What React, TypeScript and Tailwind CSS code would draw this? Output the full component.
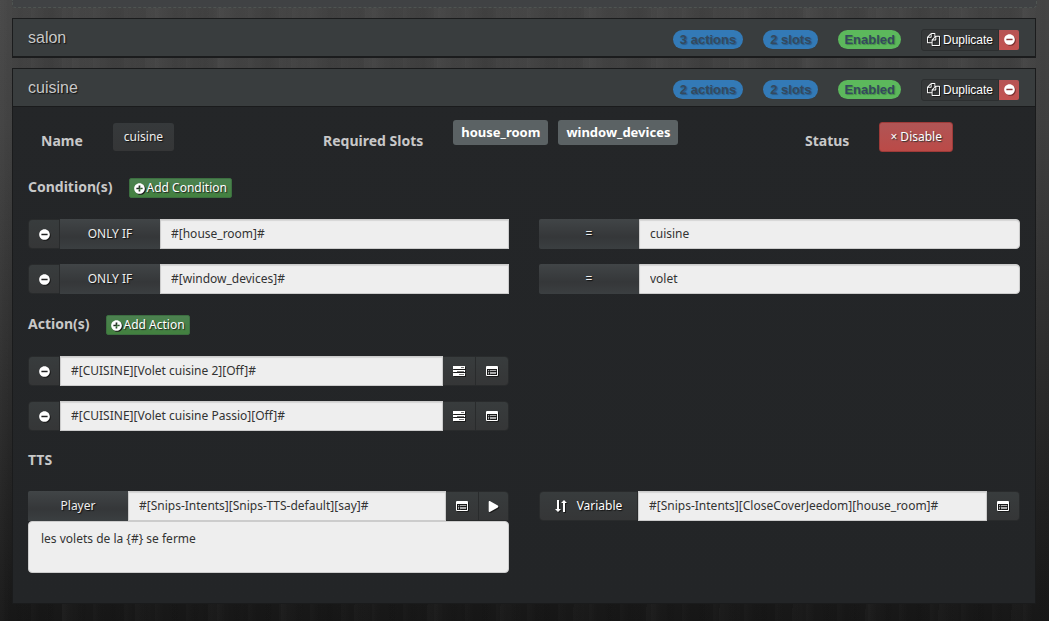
import type { ReactNode } from 'react'
import clsx from 'clsx'
import { FaMinusCircle, FaPlay, FaPlusCircle } from 'react-icons/fa'

const inputClass =
  'block h-[30px] w-full min-w-0 flex-1 border border-[#ccc] bg-[#eee] px-[10px] pb-[2px] text-xs text-[#333] shadow-[inset_0_1px_1px_rgba(0,0,0,0.1)] outline-none'
const addonClass =
  'flex h-[30px] w-[100px] shrink-0 items-center justify-center bg-gradient-to-b from-[#414547] via-[#353739] via-60% to-[#3b3f41] text-xs text-[#eee] [text-shadow:1px_1px_1px_#111]'
const toolClass =
  'flex h-[30px] shrink-0 items-center justify-center border border-[#292b2c] bg-gradient-to-b from-[#383c3d] to-[#353637] text-xs text-white'

const iconShadow = 'drop-shadow-[1px_1px_0_#1a1a1a]'

function CopyIcon() {
  return (
    <svg viewBox="0 0 1792 1792" className={clsx('size-[13px]', iconShadow)} fill="currentColor" aria-hidden="true">
      <path d="M1696 384q40 0 68 28t28 68v1216q0 40-28 68t-68 28h-960q-40 0-68-28t-28-68v-288h-544q-40 0-68-28t-28-68v-672q0-40 20-88t48-76l408-408q28-28 76-48t88-20h416q40 0 68 28t28 68v328q68-40 128-40h416zm-544 213l-299 299h299v-299zm-640-384l-299 299h299v-299zm196 647l316-316v-416h-384v416q0 40-28 68t-68 28h-416v640h512v-256q0-40 20-88t48-76zm956 804v-1152h-384v416q0 40-28 68t-68 28h-416v640h896z" />
    </svg>
  )
}

function TasksIcon() {
  return (
    <svg viewBox="0 0 12 10" className={clsx('h-[10px] w-3', iconShadow)} aria-hidden="true">
      <path fill="#fff" d="M0 0h12v3H0zM0 4h12v2H0zM0 7h12v3H0z" />
      <path fill="#777" d="M8 1h3v1H8zM4 5h7v1H4zM6 8h5v1H6z" />
    </svg>
  )
}

function ListIcon() {
  return (
    <svg viewBox="0 0 12 10" className={clsx('h-[10px] w-3', iconShadow)} aria-hidden="true">
      <path fill="#fff" fillRule="evenodd" d="M1 0h10q1 0 1 1v8q0 1-1 1H1q-1 0-1-1V1q0-1 1-1zM1 3v6h10V3z" />
      <path fill="#aaa" d="M2 4h1v1H2zM4 4h6v1H4zM2 6h1v2H2zM4 6h6v2H4z" />
    </svg>
  )
}

function SwapIcon() {
  return (
    <svg viewBox="0 0 12 12" className={clsx('size-3', iconShadow)} fill="#fff" aria-hidden="true">
      <path d="M2 0h2v9h2l-3 3-3-3h2zM8 12h2V3h2L9 0 6 3h2z" />
    </svg>
  )
}

function Badge({ green, children }: { green?: boolean; children: ReactNode }) {
  return (
    <span
      className={clsx(
        'rounded-full text-center text-[13px] leading-[19px] font-bold text-[#34495e] [text-shadow:1px_1px_1px_rgba(0,0,0,0.25)]',
        green ? 'bg-[#5cb85c] px-[6px]' : 'bg-[#337ab7] px-[7px]',
      )}
    >
      {children}
    </span>
  )
}

function PanelHeader({ title, actions }: { title: string; actions: number }) {
  return (
    <header className="flex h-[37px] items-center justify-between bg-[#393d3e] pr-4 pl-[15px] font-['Liberation_Sans',Arial,sans-serif]">
      <h2 className="text-base text-[#c8c8c8] [text-shadow:1px_1px_1px_#111]">{title}</h2>
      <div className="flex items-center gap-5 pt-[4px]">
        <Badge>{actions} actions</Badge>
        <Badge>2 slots</Badge>
        <Badge green>Enabled</Badge>
        <div className="flex items-center">
          <button
            type="button"
            className="flex h-[22px] items-center gap-[3px] rounded-l-[3px] border border-[#2c2f30] bg-[#363839] px-[5px] text-xs text-white [text-shadow:1px_1px_1px_#111]"
          >
            <CopyIcon />
            Duplicate
          </button>
          <button
            type="button"
            aria-label={`Remove ${title}`}
            className="flex h-5 w-5 items-center justify-center rounded-r-[2px] bg-gradient-to-b from-[#b65454] to-[#c45250] pb-px text-white"
          >
            <FaMinusCircle className="size-[11px] drop-shadow-[1px_1px_0_#7a2f2e]" />
          </button>
        </div>
      </div>
    </header>
  )
}

function RemoveButton({ label }: { label: string }) {
  return (
    <button type="button" aria-label={label} className={clsx(toolClass, 'w-8 rounded-l-[4px]')}>
      <FaMinusCircle className={clsx('size-[11px]', iconShadow)} />
    </button>
  )
}

function AddButton({ children }: { children: ReactNode }) {
  return (
    <button
      type="button"
      className="flex h-5 items-center gap-[2px] rounded-[2px] border border-[#3c6f40] bg-gradient-to-b from-[#4c8150] to-[#43813f] px-1 text-xs text-white [text-shadow:1px_1px_1px_#222]"
    >
      <FaPlusCircle className={clsx('size-[11px]', iconShadow)} />
      {children}
    </button>
  )
}

function SectionTitle({ title, children }: { title: string; children?: ReactNode }) {
  return (
    <div className="flex h-5 items-center gap-4">
      <h3 className="pb-[2px] text-sm font-bold text-[#c8c8c8]">{title}</h3>
      {children}
    </div>
  )
}

function ConditionRow({ name, value }: { name: string; value: string }) {
  return (
    <div className="grid grid-cols-2 gap-[30px]">
      <div className="flex">
        <RemoveButton label={`Remove condition ${name}`} />
        <label htmlFor={`cond-${name}`} className={addonClass}>ONLY IF</label>
        <input id={`cond-${name}`} className={inputClass} defaultValue={`#[${name}]#`} />
      </div>
      <div className="flex">
        <label htmlFor={`value-${name}`} className={clsx(addonClass, 'rounded-l-[2px]')}>=</label>
        <input id={`value-${name}`} className={clsx(inputClass, 'rounded-r-[4px]')} defaultValue={value} />
      </div>
    </div>
  )
}

function ActionRow({ command }: { command: string }) {
  return (
    <div className="grid grid-cols-2 gap-[30px]">
      <div className="flex">
        <RemoveButton label={`Remove action ${command}`} />
        <input aria-label="Action" className={inputClass} defaultValue={command} />
        <button type="button" aria-label="Scenario action" className={clsx(toolClass, 'w-[33px] border-l-0')}>
          <TasksIcon />
        </button>
        <button type="button" aria-label="Select command" className={clsx(toolClass, '-ml-px w-[34px] rounded-r-[4px]')}>
          <ListIcon />
        </button>
      </div>
    </div>
  )
}

export default function App() {
  return (
    <div className="min-h-screen bg-[repeating-linear-gradient(90deg,rgba(255,255,255,0.015)_0px,transparent_9px,rgba(0,0,0,0.03)_20px,transparent_31px),repeating-linear-gradient(91deg,rgba(255,255,255,0.02)_0px,transparent_23px,rgba(0,0,0,0.05)_50px,transparent_73px),linear-gradient(#454545,#404040_20%,#2c2c2c_60%,#171717)] px-3 font-['Noto_Sans',sans-serif] text-xs">
      <div className="h-2 rounded-b-[4px] border border-t-0 border-dashed border-[#4f5552] bg-[#404244]" />

      <section className="mt-[10px] mr-px border border-b-2 border-[#1b1c1d]">
        <PanelHeader title="salon" actions={3} />
      </section>

      <section className="mt-[10px] mr-px border border-[#1a1b1c] bg-gradient-to-b from-[#242628] to-[#232527]">
        <PanelHeader title="cuisine" actions={2} />

        <div className="border-t border-[#1a1b1c] px-[15px] pt-[13px] pb-[30px]">
          <div className="grid h-8 grid-cols-[282fr_482fr_228fr] text-sm font-bold text-[#c8c8c8]">
            <div className="flex items-center gap-[30px] pl-[13px]">
              <span className="pt-[10px]">Name</span>
              <button
                type="button"
                className="mt-[2px] h-7 rounded-[3px] bg-gradient-to-b from-[#36393b] to-[#353637] px-[11px] text-xs font-normal text-[#eee] [text-shadow:1px_1px_1px_#111]"
              >
                cuisine
              </button>
            </div>
            <div className="flex gap-[30px] pl-[13px]">
              <span className="self-center pt-[10px]">Required Slots</span>
              <div className="flex gap-[10px] text-[13px]">
                <span className="h-[25px] rounded-[3px] bg-[#5b6264] px-2 leading-6 text-white">house_room</span>
                <span className="h-[25px] rounded-[3px] bg-[#5b6264] px-2 leading-6 text-white">window_devices</span>
              </div>
            </div>
            <div className="flex items-center gap-[30px] pl-[13px]">
              <span className="pt-[10px]">Status</span>
              <button
                type="button"
                className="mt-[2px] h-[30px] rounded-[3px] border border-[#9e3a38] bg-gradient-to-b from-[#b05555] to-[#bb4a47] px-[10px] text-xs font-normal text-white [text-shadow:1px_1px_1px_#333]"
              >
                × Disable
              </button>
            </div>
          </div>

          <div className="mt-[26px]">
            <SectionTitle title="Condition(s)">
              <AddButton>Add Condition</AddButton>
            </SectionTitle>
          </div>
          <div className="mt-[21px] flex flex-col gap-[15px]">
            <ConditionRow name="house_room" value="cuisine" />
            <ConditionRow name="window_devices" value="volet" />
          </div>

          <div className="mt-[21px]">
            <SectionTitle title="Action(s)">
              <AddButton>Add Action</AddButton>
            </SectionTitle>
          </div>
          <div className="mt-[21px] flex flex-col gap-[15px]">
            <ActionRow command="#[CUISINE][Volet cuisine 2][Off]#" />
            <ActionRow command="#[CUISINE][Volet cuisine Passio][Off]#" />
          </div>

          <div className="mt-5">
            <SectionTitle title="TTS" />
          </div>
          <div className="mt-5 grid grid-cols-2 items-start gap-[30px]">
            <div>
              <div className="flex">
                <label htmlFor="player" className={clsx(addonClass, 'rounded-tl-[2px]')}>Player</label>
                <input id="player" className={inputClass} defaultValue="#[Snips-Intents][Snips-TTS-default][say]#" />
                <button type="button" aria-label="Select player" className={clsx(toolClass, 'w-[33px] border-l-0')}>
                  <ListIcon />
                </button>
                <button type="button" aria-label="Play" className={clsx(toolClass, '-ml-px w-[31px] rounded-tr-[4px]')}>
                  <FaPlay className={clsx('size-[11px]', iconShadow)} />
                </button>
              </div>
              <textarea
                aria-label="Message"
                className="block h-[52px] w-full resize-none rounded-[4px] border border-[#ccc] bg-[#eee] px-3 py-2 text-xs leading-[18px] text-[#333] outline-none"
                defaultValue="les volets de la {#} se ferme"
              />
            </div>
            <div className="flex">
              <button
                type="button"
                className={clsx(toolClass, 'w-[99px] gap-[10px] rounded-l-[4px] [text-shadow:1px_1px_1px_#111]')}
              >
                <SwapIcon />
                Variable
              </button>
              <input
                aria-label="Variable"
                className={inputClass}
                defaultValue="#[Snips-Intents][CloseCoverJeedom][house_room]#"
              />
              <button type="button" aria-label="Select variable" className={clsx(toolClass, 'w-[33px] rounded-r-[4px] border-l-0')}>
                <ListIcon />
              </button>
            </div>
          </div>
        </div>
      </section>
    </div>
  )
}
